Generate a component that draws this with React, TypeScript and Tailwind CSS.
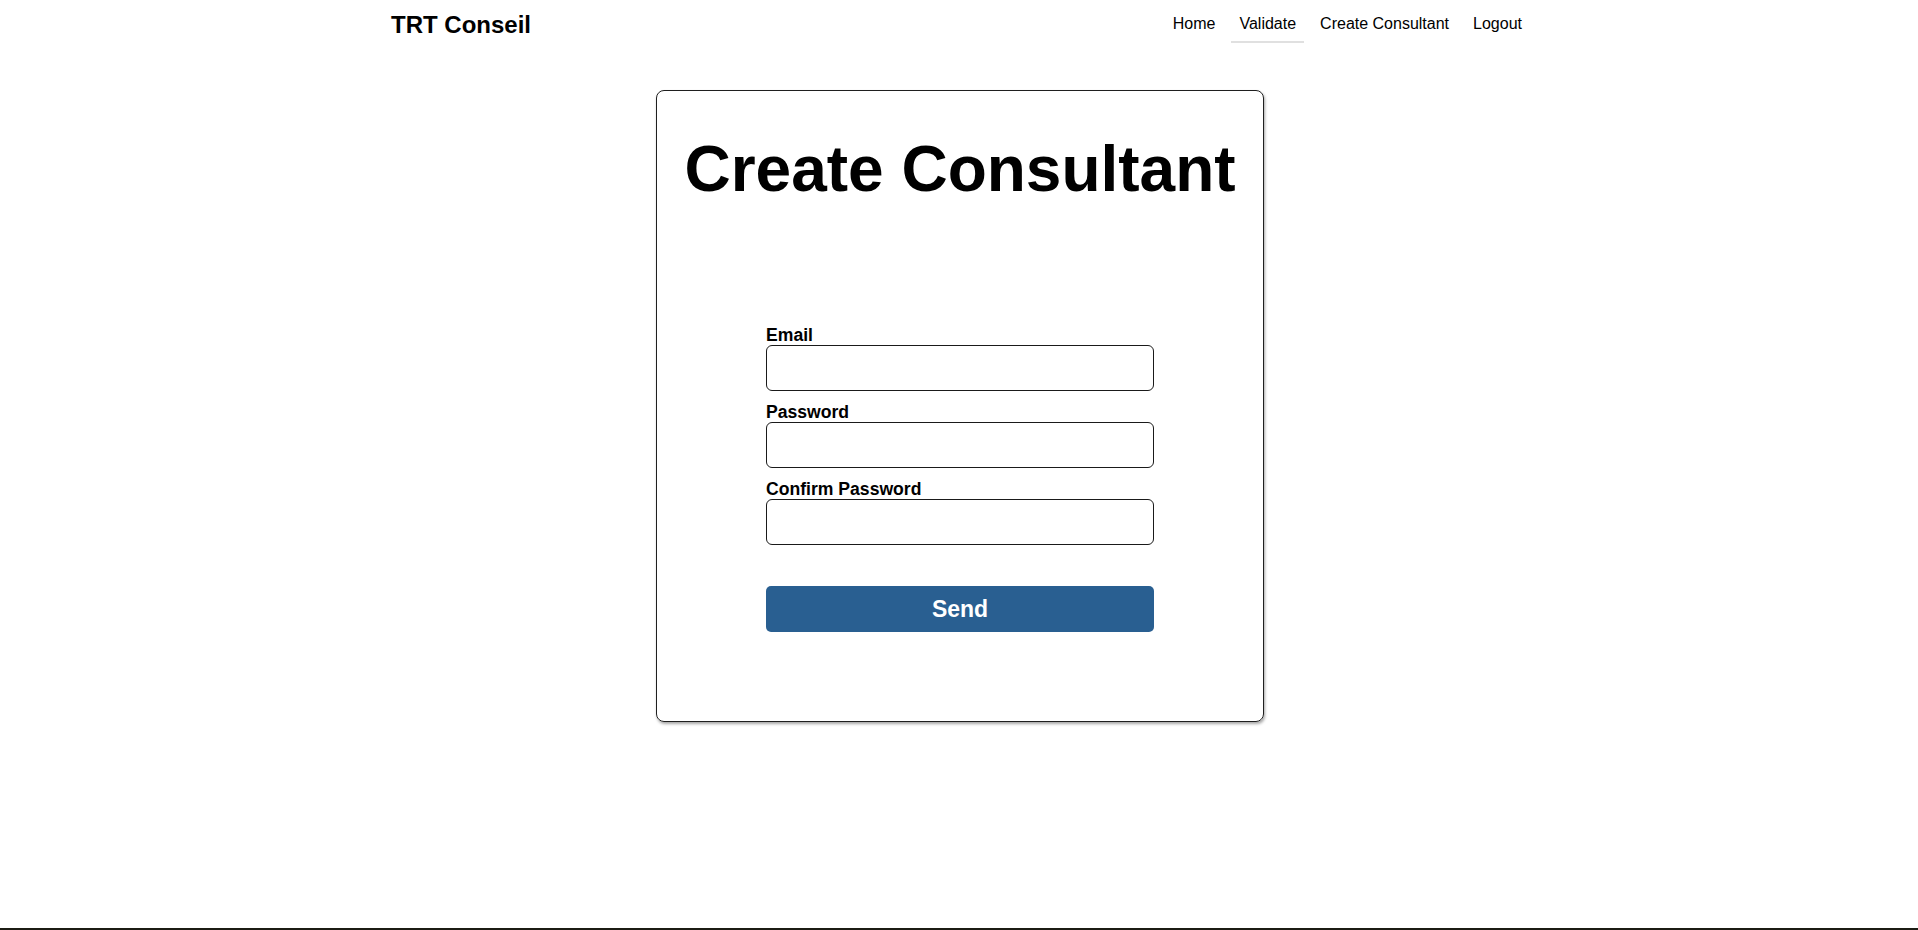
import { useState } from 'react';

const links = ['Home', 'Validate', 'Create Consultant', 'Logout'];

function Field({ label, type }: { label: string; type: string }) {
    return (
        <div className="flex flex-col">
            <label className="text-[17.6px] leading-[19px] font-bold text-black">{label}</label>
            <input
                type={type}
                className="h-[46px] w-full rounded-[6px] border border-[#1a1a1a] bg-white px-3 text-[16px] outline-none"
            />
        </div>
    );
}

export default function App() {
    const [active] = useState('Validate');

    return (
        <div className="flex min-h-[930px] flex-col bg-white pl-[2px] text-black" style={{ fontFamily: '"Liberation Sans", Arial, sans-serif' }}>
            {/* Navbar */}
            <header className="mx-auto flex h-[50px] w-[1140px] items-center justify-between">
                <a className="pl-px text-[24px] leading-[28px] font-bold">TRT Conseil</a>
                <nav className="flex items-center gap-2">
                    {links.map(link => (
                        <a
                            key={link}
                            className={
                                link === active
                                    ? 'border-b-2 border-[#e0e0e0] px-2 pt-2 pb-2 text-[16px] leading-[18px]'
                                    : 'border-b-2 border-transparent px-2 pt-2 pb-2 text-[16px] leading-[18px]'
                            }
                        >
                            {link}
                        </a>
                    ))}
                </nav>
            </header>

            {/* Main */}
            <main className="flex-1">
                <div className="mx-auto mt-[40px] w-[608px] rounded-[8px] border border-[#1f1f1f] px-4 pt-[41px] pb-[89px] shadow-[1px_2px_3px_rgba(0,0,0,0.35)]">
                    <h1 className="text-center text-[64px] leading-[74px] font-bold">Create Consultant</h1>

                    <form className="mx-auto mt-[120px] flex w-[388px] flex-col" onSubmit={e => e.preventDefault()}>
                        <div className="flex flex-col gap-3">
                            <Field label="Email" type="email" />
                            <Field label="Password" type="password" />
                            <Field label="Confirm Password" type="password" />
                        </div>
                        <button
                            type="submit"
                            className="mt-[41px] h-[46px] w-full rounded-[5px] bg-[#295f91] text-[23px] font-bold text-white"
                        >
                            Send
                        </button>
                    </form>
                </div>
            </main>

            {/* Footer */}
            <footer className="-ml-[2px] h-[2px] bg-[#1c1c14]" />
        </div>
    );
}
